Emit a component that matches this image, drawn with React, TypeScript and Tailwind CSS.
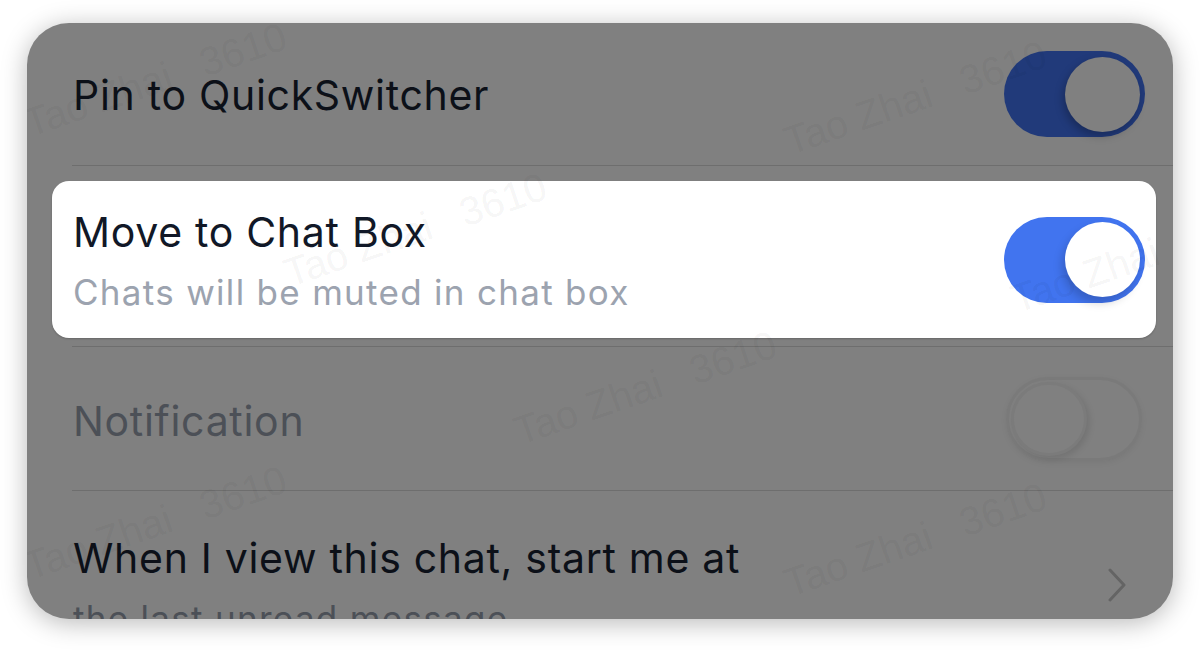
const font = { fontFamily: "Inter, 'Noto Sans', sans-serif" };

const Toggle = ({ dim }: { dim?: boolean }) => (
  <div
    className={
      "flex h-[86px] w-[141px] shrink-0 items-center justify-end rounded-full p-[5px] " +
      (dim ? "bg-[#213a7a]" : "bg-[#4174ef]")
    }
  >
    <div
      className={
        "h-[75px] w-[75px] rounded-full " +
        (dim
          ? "bg-[#808080] shadow-[-2px_4px_8px_rgba(0,0,0,0.25)]"
          : "bg-white shadow-[-3px_6px_10px_rgba(0,0,0,0.18)]")
      }
    />
  </div>
);

const OffToggle = () => (
  <div className="flex h-[84px] w-[136px] shrink-0 items-center rounded-full border-[3px] border-[#7a7a7a] p-[2px] shadow-[0_2px_6px_rgba(0,0,0,0.06)]">
    <div className="h-[74px] w-[76px] rounded-full border-[3px] border-[#7b7b7b] bg-[#808080] shadow-[3px_3px_6px_rgba(0,0,0,0.1)]" />
  </div>
);

const Divider = () => <div className="ml-[45px] h-px bg-[#6e6e6e]" />;

const marks = [
  { left: 5, top: 80 },
  { left: 765, top: 98 },
  { left: 265, top: 230 },
  { left: 992, top: 256 },
  { left: 495, top: 388 },
  { left: 5, top: 523 },
  { left: 765, top: 540 },
];

const Watermark = ({ left, top }: { left: number; top: number }) => (
  <div
    className="pointer-events-none absolute flex origin-bottom-left -rotate-[19deg] gap-[32px] whitespace-nowrap text-[40px] leading-none text-black/[0.055]"
    style={{ left, top, fontFamily: "'Liberation Sans', sans-serif" }}
  >
    <span>Tao Zhai</span>
    <span>3610</span>
  </div>
);

export default function App() {
  return (
    <div className="h-[650px] w-[1200px] bg-white pl-[27px] pt-[23px]" style={font}>
      <div className="relative h-[596px] w-[1146px] overflow-hidden rounded-[42px] bg-[#808080] shadow-[0_4px_26px_rgba(0,0,0,0.28)]">
        <div className="flex h-[142px] items-center justify-between pl-[46px] pr-[28px]">
          <span className="pt-[4px] text-[41px] tracking-[0.7px] text-[#0c1018]">Pin to QuickSwitcher</span>
          <Toggle dim />
        </div>
        <Divider />
        <div className="pb-[8px] pl-[25px] pr-[17px] pt-[15px]">
          <div className="flex h-[157px] items-center justify-between rounded-[17px] bg-white pl-[21px] pr-[11px] shadow-[0_1px_2px_rgba(0,0,0,0.2)]">
            <div className="flex flex-col pt-[5px]">
              <span className="text-[41px] leading-[48px] tracking-[0.7px] text-[#111827]">
                Move to Chat Box
              </span>
              <span className="mt-[12px] text-[35px] leading-[48px] tracking-[1.3px] text-[#9ca3af]">
                Chats will be muted in chat box
              </span>
            </div>
            <Toggle />
          </div>
        </div>
        <Divider />
        <div className="flex h-[143px] items-center justify-between pl-[46px] pr-[31px]">
          <span className="pt-[6px] text-[41px] tracking-[0.7px] text-[#4c5057]">Notification</span>
          <OffToggle />
        </div>
        <Divider />
        <div className="flex items-center justify-between pl-[46px] pr-[46px] pt-[43px]">
          <div className="flex flex-col">
            <span className="text-[41px] leading-[48px] tracking-[0.7px] text-[#0c1018]">
              When I view this chat, start me at
            </span>
            <span className="mt-[12px] text-[35px] leading-[48px] tracking-[1.3px] text-[#4c5057]">
              the last unread message
            </span>
          </div>
          <svg width="20" height="34" viewBox="0 0 20 34" className="mb-[6px] text-[#646464]">
            <polyline
              points="3,2 17,17 3,32"
              fill="none"
              stroke="currentColor"
              strokeWidth="3"
              strokeLinecap="round"
              strokeLinejoin="round"
            />
          </svg>
        </div>
        {marks.map((m, i) => (
          <Watermark key={i} left={m.left} top={m.top} />
        ))}
      </div>
    </div>
  );
}
